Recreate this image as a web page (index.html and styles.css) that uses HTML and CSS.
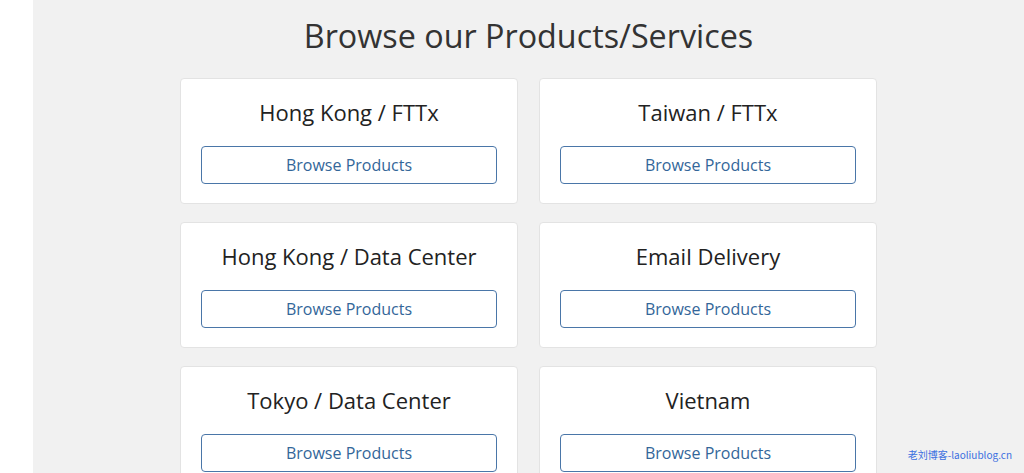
FILE: index.html
```html
<!DOCTYPE html>
<html lang="en">
<head>
<meta charset="utf-8">
<title>Browse our Products/Services</title>
<link rel="stylesheet" href="styles.css">
</head>
<body>
<div class="page">
  <aside class="side"></aside>
  <main class="main">
    <h1 class="heading">Browse our Products/Services</h1>
    <div class="grid">
      <div class="card"><h3 class="card-title">Hong Kong / FTTx</h3><a class="btn" href="#">Browse Products</a></div>
      <div class="card"><h3 class="card-title">Taiwan / FTTx</h3><a class="btn" href="#">Browse Products</a></div>
      <div class="card"><h3 class="card-title">Hong Kong / Data Center</h3><a class="btn" href="#">Browse Products</a></div>
      <div class="card"><h3 class="card-title">Email Delivery</h3><a class="btn" href="#">Browse Products</a></div>
      <div class="card"><h3 class="card-title">Tokyo / Data Center</h3><a class="btn" href="#">Browse Products</a></div>
      <div class="card"><h3 class="card-title">Vietnam</h3><a class="btn" href="#">Browse Products</a></div>
    </div>
  </main>
</div>
<div class="watermark">老刘博客-laoliublog.cn</div>
</body>
</html>
```

FILE: styles.css
```css
html, body {
  margin: 0;
  padding: 0;
  height: 100%;
  overflow: hidden;
}
body {
  font-family: "Open Sans", "Noto Sans CJK SC", sans-serif;
  background: #ffffff;
  color: #333;
}
.page {
  display: flex;
  height: 100%;
}
.side {
  width: 33px;
  flex: none;
  background: #ffffff;
}
.main {
  flex: 1;
  background: #f1f1f1;
  display: flex;
  flex-direction: column;
  align-items: center;
}
.heading {
  margin: 14px 0 0;
  font-size: 32.3px;
  font-weight: 400;
  line-height: 42px;
  color: #333;
}
.grid {
  margin-top: 22px;
  display: grid;
  grid-template-columns: 338px 338px;
  column-gap: 21px;
  row-gap: 18px;
}
.card {
  background: #fff;
  border: 1px solid #e3e3e3;
  border-radius: 4px;
  padding: 19px 20px 19px;
  display: flex;
  flex-direction: column;
  align-items: stretch;
}
.card-title {
  margin: 0 0 20px;
  font-size: 22px;
  font-weight: 400;
  line-height: 28px;
  text-align: center;
  color: #222;
}
.btn {
  display: block;
  height: 36px;
  line-height: 36px;
  border: 1px solid #4a76a8;
  border-radius: 4px;
  text-align: center;
  font-size: 16px;
  color: #336699;
  text-decoration: none;
}
.watermark {
  position: absolute;
  right: 12px;
  bottom: 11px;
  font-family: "Noto Sans CJK SC", "Noto Sans", sans-serif;
  font-size: 10px;
  line-height: 14px;
  color: #3a6fe0;
}
```
